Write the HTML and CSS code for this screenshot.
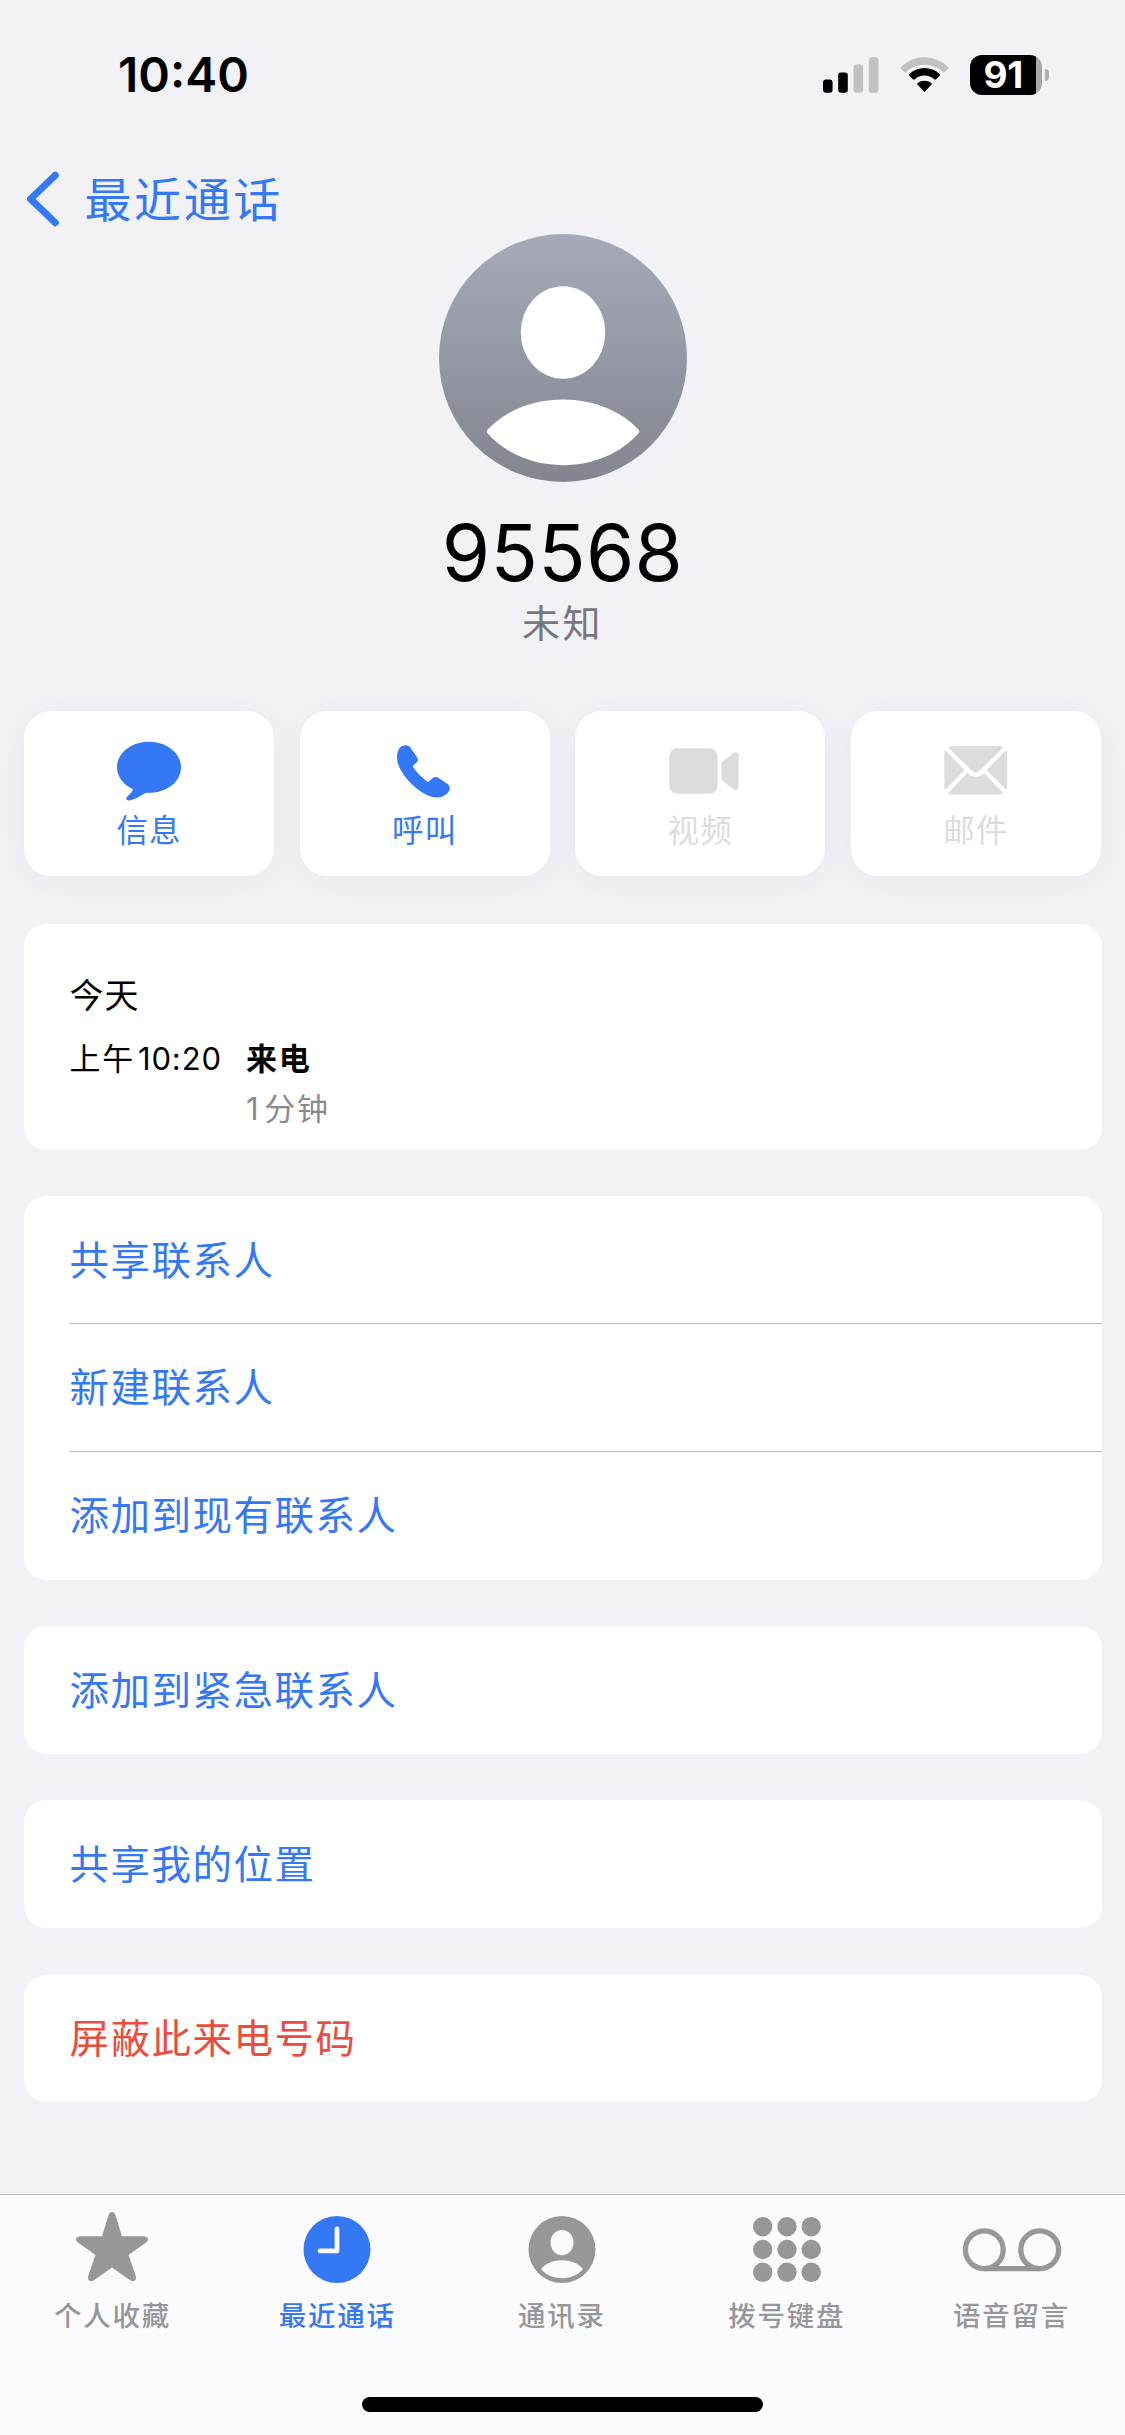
FILE: index.html
```html
<!DOCTYPE html>
<html lang="zh-CN">
<head>
<meta charset="utf-8">
<title>95568</title>
<link rel="stylesheet" href="styles.css">
</head>
<body>
<div class="screen">
  <header class="status">
    <span class="time">10:40</span>
    <div class="indicators">
      <svg class="signal" width="56" height="36" viewBox="0 0 56 36">
        <rect x="0" y="22.5" width="9.6" height="13.2" rx="3"/>
        <rect x="15.2" y="15.6" width="9.6" height="20.1" rx="3"/>
        <rect class="dim" x="30.5" y="7.6" width="9.6" height="28.1" rx="3"/>
        <rect class="dim" x="45.8" y="0.3" width="9.6" height="35.4" rx="3"/>
      </svg>
      <svg class="wifi" width="49" height="36" viewBox="0 0 49 36">
        <path class="dim" d="M1.1 12.1Q0 11 1.1 9.9A33.5 33.5 0 0 1 47.9 9.9Q49 11 47.9 12.1L44.9 15.1Q43.9 16 42.9 15.1A26.5 26.5 0 0 0 6.1 15.1Q5.1 16 4.1 15.1Z"/>
        <path d="M9.4 18.7Q8.5 17.8 9.5 16.9A22 22 0 0 1 39.5 16.9Q40.5 17.8 39.6 18.7L36.1 22.2Q35.2 23.1 34.2 22.2A14.5 14.5 0 0 0 14.8 22.2Q13.8 23.1 12.9 22.2Z"/>
        <path d="M17.4 27.5Q16.7 26.7 17.6 26.1A11.5 11.5 0 0 1 31.4 26.1Q32.3 26.7 31.6 27.5L25.3 34.2Q24.5 35.8 23.7 34.2Z"/>
      </svg>
      <div class="battery"><div class="cell"><span>91</span></div><i class="nub"></i></div>
    </div>
  </header>

  <nav class="nav">
    <svg width="34" height="56" viewBox="0 0 34 56"><path d="M29.3 4.3L4.6 28L29.3 51.7"/></svg>
    <span>最近通话</span>
  </nav>

  <section class="profile">
    <svg class="avatar" viewBox="0 0 248 248">
      <defs><linearGradient id="sky" x1="0" y1="0" x2="0" y2="1"><stop offset="0" stop-color="#a6aab8"/><stop offset="1" stop-color="#838690"/></linearGradient></defs>
      <circle cx="124" cy="124" r="124" fill="url(#sky)"/>
      <ellipse cx="124" cy="98.5" rx="42.3" ry="46.2" fill="#fff"/>
      <path d="M48.5 199.3Q47 197.5 48.5 195.8C65 177.5 93 165.5 124 165.5S183 177.5 199.5 195.8Q201 197.5 199.5 199.3C182 219 155 231.2 124 231.2S66 219 48.5 199.3Z" fill="#fff"/>
    </svg>
    <h1>95568</h1>
    <p>未知</p>
  </section>

  <section class="actions">
    <div class="action">
      <svg width="66" height="60.5" viewBox="0 0 66 66" preserveAspectRatio="none"><path d="M33 .7C50.7 .7 65 12.9 65 28.6S51 56.5 33 56.5Q31 56.5 29.5 56.8C24 60.3 19.5 63.5 13.5 64.9C10.5 65.4 9.3 62.7 11.3 60.6C14 57.8 16 55.5 17 52.6C7.2 47.5 1 38.7 1 28.6C1 12.9 15.3 .7 33 .7Z"/></svg>
      <span>信息</span>
    </div>
    <div class="action">
      <svg class="phone" width="66" height="60.5" viewBox="0 0 66 66" preserveAspectRatio="none"><path d="M9 7.2C12.5 3.9 17.3 3.7 19.7 7.5L26 17.8C27.3 20 27.2 21.7 25.6 23.4L22.6 26.4C21.7 27.4 21.7 28 22.3 29C26 34.5 30.5 39.7 35.6 43.9C36.6 44.6 37.2 44.6 38.1 43.8L41.8 40.4C43.6 38.9 45.4 38.9 47.3 40.2L56.6 46.9C59.7 49.4 59.3 53.7 56.4 57.1C51.5 62.6 44.3 62.9 36.5 59.2C24 53.2 6 33.5 6 18C6 13.5 7 9.5 9 7.2Z"/></svg>
      <span>呼叫</span>
    </div>
    <div class="action off">
      <svg class="camera" width="72" height="60.5" viewBox="0 0 72 66" preserveAspectRatio="none"><rect x="1.2" y="8" width="48.4" height="49.6" rx="8.5" ry="9"/><path d="M53.5 24.8Q53.5 23.2 54.7 22L65.7 13C67.8 11.5 70.5 12.3 70.5 15.2V50.2C70.5 53.2 67.8 54.2 65.7 52.5L54.7 43.7Q53.5 42.5 53.5 41Z"/></svg>
      <span>视频</span>
    </div>
    <div class="action off">
      <svg width="66" height="60.5" viewBox="0 0 66 66" preserveAspectRatio="none"><path d="M5 6.8Q6.5 5.5 9 5.5H56.5Q59 5.5 60.5 6.8L37.2 31.7Q32.7 37.3 28.2 31.7ZM1.3 11.6Q1.3 9.5 3.1 11L21.5 31.6L3.3 52Q1.3 53.6 1.3 51.2ZM64.2 11.6Q64.2 9.5 62.4 11L43.6 31.6L62.2 52Q64.2 53.6 64.2 51.2ZM24.4 34.8Q32.7 43.7 41.1 34.8L60.2 57Q59 58.5 56.5 58.5H9Q6.5 58.5 5 57Z"/></svg>
      <span>邮件</span>
    </div>
  </section>

  <main class="cards">
    <section class="card log">
      <h2>今天</h2>
      <div class="call">
        <span class="when">上午<b>10:20</b></span>
        <div class="what"><strong>来电</strong><small><b>1</b>分钟</small></div>
      </div>
    </section>
    <section class="card list">
      <div class="row">共享联系人</div>
      <div class="row">新建联系人</div>
      <div class="row">添加到现有联系人</div>
    </section>
    <section class="card list"><div class="row">添加到紧急联系人</div></section>
    <section class="card list"><div class="row">共享我的位置</div></section>
    <section class="card list"><div class="row danger">屏蔽此来电号码</div></section>
  </main>

  <footer class="tabbar">
    <div class="tabs">
      <div class="tab">
        <svg width="76" height="74" viewBox="0 0 76 74"><path d="M34.9 3Q38 -1.500 41.1 3L48 25.2H70.500Q76.500 26.800 72.500 31.300L54.600 43.900L61.900 65.500Q62.500 71.500 56.800 69.700L38 56.400L19.200 69.700Q13.500 71.500 14.100 65.500L21.400 43.900L3.500 31.300Q-.5 26.800 5.500 25.200H28Z"/></svg>
        <span>个人收藏</span>
      </div>
      <div class="tab on">
        <svg width="76" height="74" viewBox="0 0 76 74"><circle cx="38" cy="38.5" r="33.5"/><path d="M38 18V39.9H21" fill="none" stroke="#fbfbfd" stroke-width="4.8" stroke-linecap="round" stroke-linejoin="round"/></svg>
        <span>最近通话</span>
      </div>
      <div class="tab">
        <svg width="76" height="74" viewBox="0 0 76 74"><circle cx="38" cy="38.5" r="33.5"/><ellipse cx="38" cy="31.6" rx="11.5" ry="12.7" fill="#fbfbfd"/><path d="M17.8 59Q17 58.1 17.8 57.2C22 52.5 29 49.3 38 49.3S54 52.5 58.2 57.2Q59 58.1 58.2 59C53.5 64 46.5 67.2 38 67.2S22.5 64 17.8 59Z" fill="#fbfbfd"/></svg>
        <span>通讯录</span>
      </div>
      <div class="tab">
        <svg width="76" height="74" viewBox="0 0 76 74"><circle cx="13.7" cy="15.7" r="9.7"/><circle cx="38" cy="15.7" r="9.7"/><circle cx="62.2" cy="15.7" r="9.7"/><circle cx="13.7" cy="38.5" r="9.7"/><circle cx="38" cy="38.5" r="9.7"/><circle cx="62.2" cy="38.5" r="9.7"/><circle cx="13.7" cy="61.3" r="9.7"/><circle cx="38" cy="61.3" r="9.7"/><circle cx="62.2" cy="61.3" r="9.7"/></svg>
        <span>拨号键盘</span>
      </div>
      <div class="tab">
        <svg width="100" height="74" viewBox="0 0 100 74"><g fill="none" stroke="currentColor" stroke-width="5.3"><circle cx="22.3" cy="38.7" r="18.9"/><circle cx="77.7" cy="38.7" r="18.9"/><path d="M22.3 57.6H77.7"/></g></svg>
        <span>语音留言</span>
      </div>
    </div>
    <div class="home"></div>
  </footer>
</div>
</body>
</html>
```
FILE: styles.css
```css
* { box-sizing: border-box; margin: 0; padding: 0; }

body {
  background: #f1f1f6;
  color: #000;
  font-family: Inter, "Noto Sans CJK SC", sans-serif;
}

svg { display: block; fill: currentColor; flex: none; overflow: visible; }

.screen {
  width: 1125px;
  height: 2435px;
  display: flex;
  flex-direction: column;
  overflow: hidden;
}

/* Status bar */
.status {
  height: 150px;
  padding: 0 76px 0 118px;
  display: flex;
  align-items: center;
  justify-content: space-between;
}
.time { font-size: 48px; font-weight: 600; line-height: 60px; }
.indicators { display: flex; align-items: center; }
.dim { fill: #c0c0c5; }
.signal { margin-right: 21px; }
.wifi { margin-right: 21px; }
.battery { display: flex; align-items: center; gap: 3px; }
.cell {
  width: 72.5px;
  height: 40px;
  border-radius: 12px;
  background: linear-gradient(90deg, #000 66px, #a8a8ac 66px);
  color: #fff;
  font-size: 37px;
  font-weight: 700;
  line-height: 40px;
  letter-spacing: -0.2px;
  padding-left: 14px;
}
.nub { width: 4px; height: 12px; border-radius: 0 6px 6px 0; background: #b0b0b4; }

/* Navigation */
.nav {
  height: 83.7px;
  padding: 14px 0 0 25.5px;
  display: flex;
  align-items: center;
  gap: 25px;
  color: #3478f6;
}
.nav path { fill: none; stroke: currentColor; stroke-width: 7; stroke-linecap: round; stroke-linejoin: round; }
.nav span { padding-top: 2px; font-size: 47px; line-height: 60px; letter-spacing: 2.6px; }

/* Caller */
.profile { display: flex; flex-direction: column; align-items: center; }
.avatar { width: 248px; height: 248px; }
.profile h1 { margin-top: 25px; font-size: 78px; font-weight: 400; line-height: 92px; letter-spacing: 0.3px; }
.profile p { font-size: 38px; line-height: 48px; letter-spacing: 2.4px; color: #77777b; }

/* Quick actions */
.actions {
  margin-top: 64px;
  padding: 0 24px;
  display: grid;
  grid-template-columns: repeat(4, 1fr);
  gap: 25.3px;
}
.action {
  height: 165px;
  padding-top: 30.5px;
  border-radius: 27px;
  background: #fff;
  box-shadow: 0 4px 36px rgba(0, 0, 0, 0.045);
  display: flex;
  flex-direction: column;
  align-items: center;
  color: #3478f6;
}
.phone { margin-left: -2px; }
.camera { margin-left: 7px; }
.action span { margin-top: 7px; font-size: 31.5px; line-height: 44px; letter-spacing: 1.2px; }
.action.off { color: #dcdcde; }

/* Cards */
.cards {
  margin-top: 48.5px;
  padding: 0 23.5px;
  display: flex;
  flex-direction: column;
  gap: 46.5px;
}
.card { border-radius: 22px; background: #fff; }
.log { height: 225.5px; padding: 49px 46px 0; }
.log h2 { font-size: 34px; font-weight: 400; line-height: 46px; letter-spacing: 1px; }
.call { margin-top: 14.5px; display: flex; font-size: 31px; line-height: 50px; letter-spacing: 1.7px; }
.when { width: 176.5px; white-space: nowrap; }
.when b { margin-left: 3px; font-weight: 400; letter-spacing: 0.9px; }
.what { display: flex; flex-direction: column; }
.what strong { font-weight: 700; }
.what small { font-size: 31px; color: #8a8a8e; }
.what small b { font-weight: 400; margin-right: 4px; }

.list { padding-left: 45px; }
.row {
  height: 127.8px;
  padding: 1.5px 0 0 1px;
  font-size: 39.5px;
  line-height: 127.8px;
  letter-spacing: 1.5px;
  color: #3478f6;
}
.row:not(:last-child) { border-bottom: 1.5px solid #bebec2; }
.row.danger { color: #eb4d3d; }

/* Tab bar */
.tabbar {
  margin-top: auto;
  height: 241px;
  border-top: 1.5px solid #b8b8bc;
  background: #fbfbfd;
  display: flex;
  flex-direction: column;
  align-items: center;
}
.tabs { width: 1124px; margin-right: 1px; display: grid; grid-template-columns: repeat(5, 1fr); }
.tab { padding-top: 16px; display: flex; flex-direction: column; align-items: center; color: #97979a; }
.tab span { margin-top: 11px; font-size: 27.5px; font-weight: 500; line-height: 40px; letter-spacing: 1.75px; }
.tab.on { color: #3478f6; }
.home { margin-top: 61px; width: 401px; height: 14.5px; border-radius: 8px; background: #000; }
```
